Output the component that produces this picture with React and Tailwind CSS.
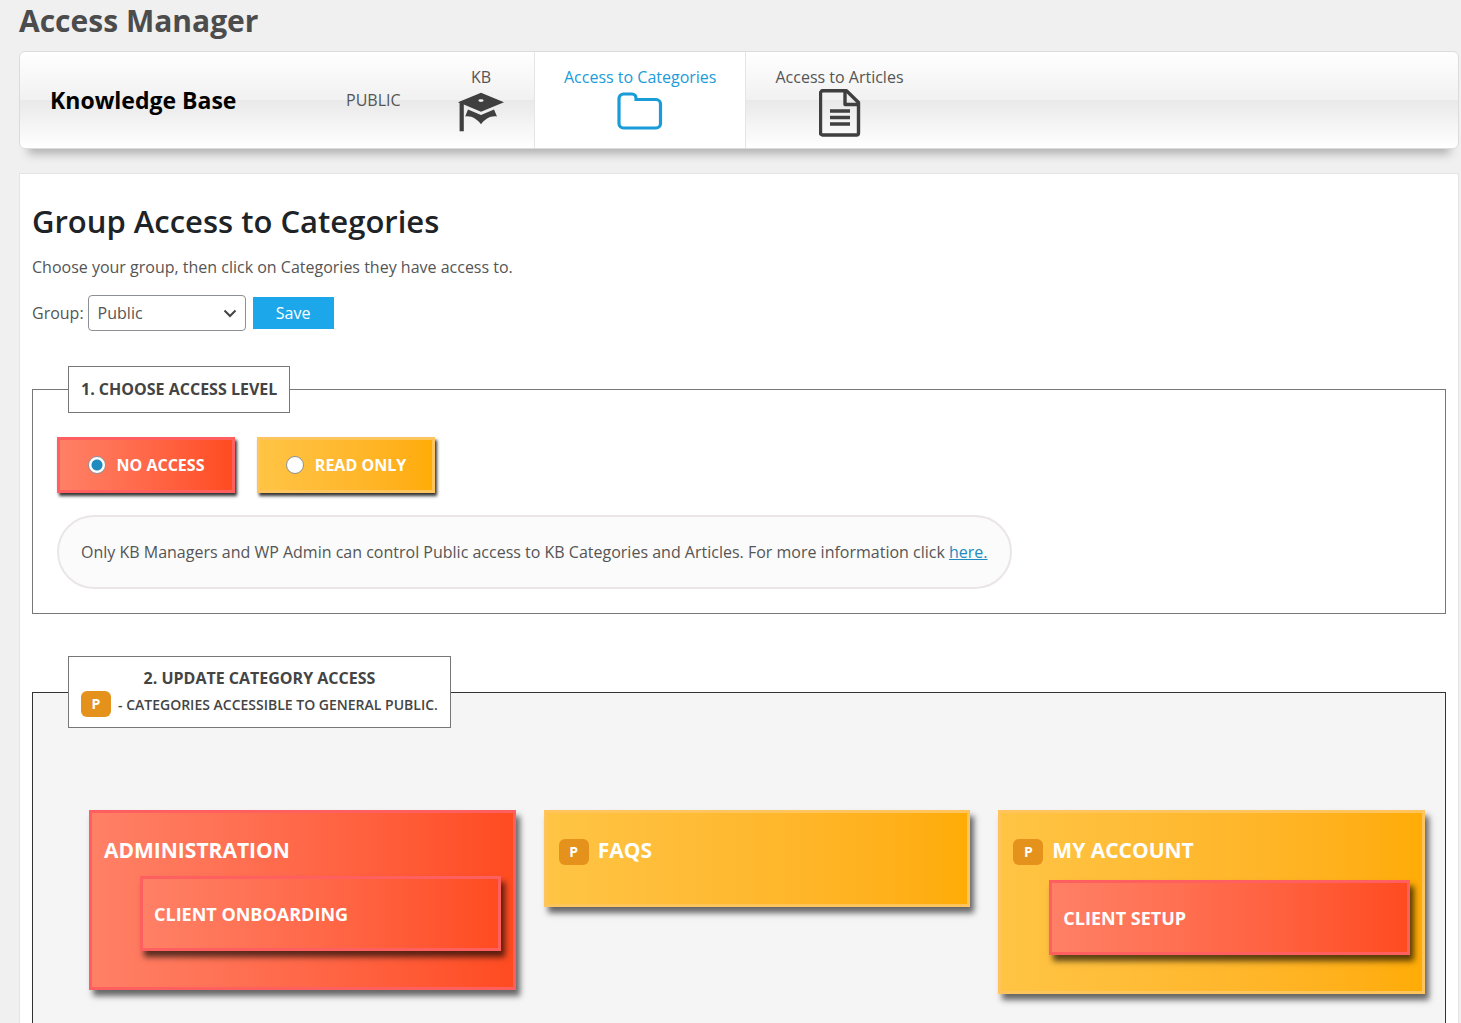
import { useState } from "react";

const RED = "border-[#ff5f5f] bg-linear-to-r from-[#ff8066] to-[#ff4b20]";
const AMBER = "border-[#ffc45c] bg-linear-to-r from-[#ffc444] to-[#ffac05]";

function GraduationCapIcon() {
  return (
    <svg width="46" height="42" viewBox="0 0 46 42" fill="#3f3f3f" aria-hidden="true">
      <path
        fillRule="evenodd"
        d="M23 0.700 46 10.200 23 19.700 5.800 12.600V39.200H1.600V10.900L0 10.200ZM23 7.300c-1.500 0-2.600.5-2.600 1.300s1.100 1.300 2.600 1.300 2.600-.5 2.600-1.300-1.100-1.300-2.600-1.300Z"
      />
      <path d="M10 17.500 23 23 36 17.500 39 24.500C32.500 23.500 27 27 23 32.300 19 27 13.500 23.500 7.200 24.500Z" />
    </svg>
  );
}

function FolderIcon() {
  return (
    <svg width="46" height="42" viewBox="0 0 46 42" fill="none" stroke="currentColor" strokeWidth="3.200" aria-hidden="true">
      <path d="M6.500 2H15A4 4 0 0 1 19 6V7.500H39A4.500 4.500 0 0 1 43.500 12V31.500A4.500 4.500 0 0 1 39 36H6.500A4.500 4.500 0 0 1 2 31.500V6.500A4.500 4.500 0 0 1 6.500 2Z" />
    </svg>
  );
}

function DocumentIcon() {
  return (
    <svg width="42" height="48" viewBox="0 0 42 48" fill="none" stroke="#3f3f3f" strokeWidth="3.400" strokeLinejoin="round" aria-hidden="true">
      <path d="M3 1.700H27.500L39.500 13.500V44A2 2 0 0 1 37.500 46H3.500A2 2 0 0 1 1.500 44V3.500Z" />
      <path d="M26 2V15.500H39" />
      <path d="M11 22H31M11 28.500H31M11 35H31" />
    </svg>
  );
}

function PublicBadge() {
  return (
    <span className="mt-0.5 mb-[3px] flex h-[26px] w-[30px] shrink-0 items-center justify-center rounded-md bg-[#e5921d] text-sm font-bold text-white">
      P
    </span>
  );
}

function AccessOption({ tone, label, checked, onChange }) {
  return (
    <label
      className={`flex h-[56px] w-[178px] items-center justify-center gap-[11px] border-[3px] text-base font-bold text-white shadow-[2px_3px_3px_#333] ${tone}`}
    >
      <input
        type="radio"
        name="access-level"
        checked={checked}
        onChange={onChange}
        className="size-[18px] appearance-none rounded-full border border-[#8c8f94] bg-white bg-[radial-gradient(circle,#1e8cbe_0_5px,transparent_6px)] not-checked:bg-none"
      />
      {label}
    </label>
  );
}

function Category({ tone, title, isPublic, child }) {
  return (
    <article className={`border-[3px] px-3 pt-6 pb-9 text-white shadow-[4px_6px_6px_#666] ${tone}`}>
      <div className="flex items-start gap-[9px]">
        {isPublic && <PublicBadge />}
        <button type="button" className="text-[21px] leading-[27px] font-bold">
          {title}
        </button>
      </div>
      {child && (
        <button
          type="button"
          className={`mt-3 ml-9 flex h-[75px] w-[calc(100%-36px)] items-center border-[3px] px-[11px] text-lg font-bold shadow-[4px_6px_6px_rgba(0,0,0,0.65)] ${RED}`}
        >
          {child}
        </button>
      )}
    </article>
  );
}

const LEGEND = "ml-[35px] border border-[#777] bg-white px-3 text-[#444]";

export default function App() {
  const [level, setLevel] = useState("none");

  return (
    <div className="min-h-screen bg-[#f0f0f0] pr-[2px] pl-[19px] font-['Open_Sans','Noto_Sans',sans-serif] text-base text-[#555]">
      <h1 className="pt-0.5 text-[30px] leading-[38px] font-bold text-[#4c4c4c]">Access Manager</h1>

      <header className="mt-[11px] flex h-[98px] items-stretch rounded-md border border-[#dcdcdc] bg-[linear-gradient(#fff,#f1f1f1_50%,#e9e9e9_50%,#fff)] shadow-[0_14px_9px_-9px_#b0b0b0]">
        <h2 className="flex w-[326px] items-center pl-[30px] text-[23px] font-bold text-black">Knowledge Base</h2>
        <span className="flex w-[82px] items-center">PUBLIC</span>
        <nav className="flex">
          <a href="#kb" className="flex flex-col items-center px-[30px] pt-[15px]">
            <span className="leading-5">KB</span>
            <span className="mt-[5px]">
              <GraduationCapIcon />
            </span>
          </a>
          <a href="#categories" className="flex flex-col items-center border-x border-[#e5e5e5] bg-white px-[29px] pt-[15px] text-[#1a9cd8]">
            <span className="leading-5">Access to Categories</span>
            <span className="mt-[5px]">
              <FolderIcon />
            </span>
          </a>
          <a href="#articles" className="flex flex-col items-center px-[29px] pt-[15px]">
            <span className="leading-5">Access to Articles</span>
            <span className="mt-0.5">
              <DocumentIcon />
            </span>
          </a>
        </nav>
      </header>

      <main className="mt-6 border border-[#e5e5e5] bg-white px-3 pt-[25px] pb-6">
        <h2 className="text-[31px] leading-[44px] font-semibold text-[#1d2327]">Group Access to Categories</h2>
        <p className="mt-3 leading-6">Choose your group, then click on Categories they have access to.</p>

        <form className="mt-4 flex items-center" onSubmit={(e) => e.preventDefault()}>
          <label htmlFor="group">Group:</label>
          <span className="relative ml-1 w-[158px]">
            <select id="group" className="h-9 w-full appearance-none rounded border border-[#8c8f94] bg-white px-[9px]">
              <option>Public</option>
            </select>
            <svg className="pointer-events-none absolute top-3.5 right-[9px]" width="14" height="9" viewBox="0 0 14 9" fill="none" stroke="#444" strokeWidth="2" aria-hidden="true">
              <path d="M1.500 1.500 7 7 12.500 1.500" />
            </svg>
          </span>
          <button type="submit" className="ml-[7px] h-8 w-[81px] bg-[#1ca7ea] text-white">
            Save
          </button>
        </form>

        <fieldset className="mt-[35px] border border-[#777]">
          <legend className={LEGEND}>
            <span className="block py-3 text-base leading-[21px] font-bold">1. CHOOSE ACCESS LEVEL</span>
          </legend>
          <div className="p-6">
            <div className="flex gap-[22px]">
              <AccessOption tone={RED} label="NO ACCESS" checked={level === "none"} onChange={() => setLevel("none")} />
              <AccessOption tone={AMBER} label="READ ONLY" checked={level === "read"} onChange={() => setLevel("read")} />
            </div>
            <p className="mt-[22px] w-fit rounded-[37px] border-2 border-[#ebe6e6] bg-[#fbfbfb] px-[22px] py-[23px] leading-6">
              Only KB Managers and WP Admin can control Public access to KB Categories and Articles. For more information click{" "}
              <a href="#info" className="text-[#1e8cbe] underline">
                here.
              </a>
            </p>
          </div>
        </fieldset>

        <fieldset className="mt-[42px] border border-[#333] bg-[#f5f5f5]">
          <legend className={LEGEND}>
            <span className="block pt-[11px] text-center text-base leading-[21px] font-bold">2. UPDATE CATEGORY ACCESS</span>
            <span className="flex items-center gap-[7px] pb-[7px] text-sm font-semibold">
              <PublicBadge />- CATEGORIES ACCESSIBLE TO GENERAL PUBLIC.
            </span>
          </legend>
          <div className="grid grid-cols-3 items-start gap-7 pt-[82px] pr-5 pb-14 pl-14">
            <Category tone={RED} title="ADMINISTRATION" child="CLIENT ONBOARDING" />
            <Category tone={AMBER} title="FAQS" isPublic />
            <Category tone={AMBER} title="MY ACCOUNT" isPublic child="CLIENT SETUP" />
          </div>
        </fieldset>
      </main>
    </div>
  );
}
